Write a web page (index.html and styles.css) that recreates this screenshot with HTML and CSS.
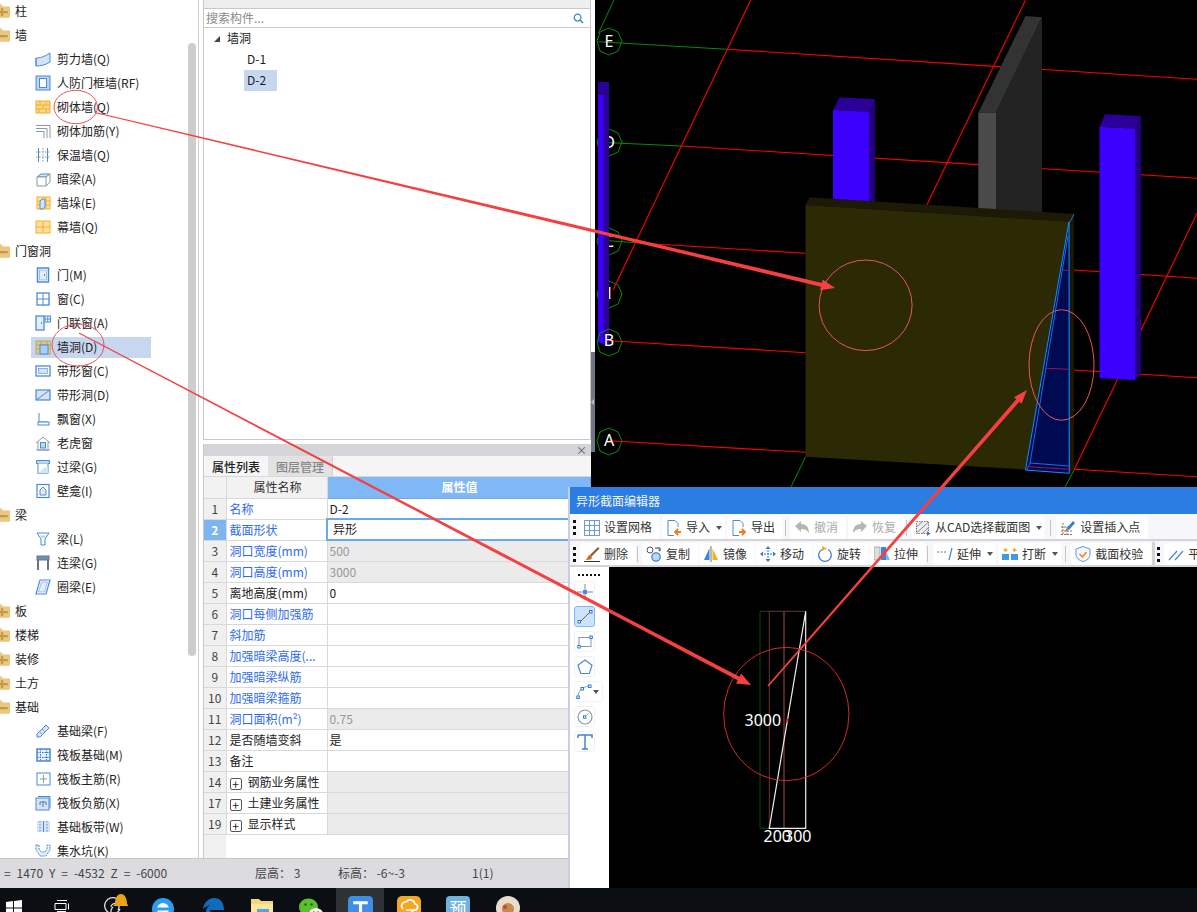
FILE: index.html
```html
<!DOCTYPE html>
<html lang="zh">
<head>
<meta charset="utf-8">
<title>异形截面编辑器</title>
<link rel="stylesheet" href="styles.css">
</head>
<body>
<div class="desktop">
  <div class="workspace">
    <div class="leftcol">
      <div class="panes">
        <nav class="tree">
          <ul class="tree-list">
            <li class="group"><svg class="folder" viewBox="0 2 14 12"><path d="M0 2h6l2 2h8v10H0z" fill="#e9c77f"/><path d="M2 8h10v2H2zM6 5.500h2v7H6z" fill="#c9974a"/></svg>柱</li>
            <li class="group"><svg class="folder" viewBox="0 2 14 12"><path d="M0 2h6l2 2h8v10H0z" fill="#e9c77f"/><path d="M2 8h10v2H2z" fill="#c9974a"/></svg>墙</li>
            <li class="leaf"><svg class="ic" viewBox="0 0 16 16"><path d="M1 7c4 0 8-1 14-5v9c-5 3-9 4-14 4z" fill="#d5e3f5" stroke="#4a8bd6"/><path d="M1 7v8" stroke="#4a8bd6"/></svg>剪力墙(Q)</li>
            <li class="leaf"><svg class="ic" viewBox="0 0 16 16"><rect x="1" y="1" width="14" height="14" fill="#bcd4f0" stroke="#4a8bd6"/><rect x="4.500" y="3.500" width="7" height="9" fill="#fff" stroke="#4a8bd6"/></svg>人防门框墙(RF)</li>
            <li class="leaf"><svg class="ic" viewBox="0 0 16 16"><rect x="1" y="2" width="14" height="12" fill="#fbd88a" stroke="#f0ad2e"/><path d="M1 6h14M1 10h14M5 2v4M11 2v4M8 6v4M4 10v4M11 10v4" stroke="#f0ad2e" fill="none"/></svg>砌体墙(Q)</li>
            <li class="leaf"><svg class="ic" viewBox="0 0 16 16"><path d="M1 2.500h14V15M1 5.500h11V15M1 8.500h8V15" fill="none" stroke="#8a98a8"/></svg>砌体加筋(Y)</li>
            <li class="leaf"><svg class="ic" viewBox="0 0 16 16"><path d="M3.500 1v14M12.500 1v14" stroke="#4a8bd6"/><path d="M8 1v14M1 5h14M1 10h14" stroke="#8a98a8" stroke-dasharray="1.500 1.500"/></svg>保温墙(Q)</li>
            <li class="leaf"><svg class="ic" viewBox="0 0 16 16"><path d="M2 6l4-3h9l-4 3z" fill="#d5e3f5" stroke="#4a8bd6"/><path d="M2 6h9v9H2zM11 6l4-3v8l-4 4" fill="#fff" stroke="#8a98a8"/></svg>暗梁(A)</li>
            <li class="leaf"><svg class="ic" viewBox="0 0 16 16"><rect x="2" y="2" width="13" height="12" fill="#fde3a8" stroke="#f5b01e"/><path d="M2 6h13M2 10h13M11 2v12" stroke="#f5b01e"/><path d="M5 6l2-2h3v8l-2 2H5z" fill="#d5e3f5" stroke="#4a8bd6"/></svg>墙垛(E)</li>
            <li class="leaf"><svg class="ic" viewBox="0 0 16 16"><rect x="1" y="2" width="14" height="12" fill="#fde0a0" stroke="#f5b01e"/><path d="M1 8h14M8 2v12" stroke="#f5b01e"/></svg>幕墙(Q)</li>
            <li class="group"><svg class="folder" viewBox="0 2 14 12"><path d="M0 2h6l2 2h8v10H0z" fill="#e9c77f"/><path d="M2 8h10v2H2z" fill="#c9974a"/></svg>门窗洞</li>
            <li class="leaf"><svg class="ic" viewBox="0 0 16 16"><rect x="2.500" y="1" width="11" height="14" fill="#fff" stroke="#4a8bd6" stroke-width="1.500"/><rect x="4.500" y="3" width="7" height="10" fill="#e4eefa" stroke="#4a8bd6" stroke-width=".5"/><path d="M9.500 7v2" stroke="#4a8bd6"/></svg>门(M)</li>
            <li class="leaf"><svg class="ic" viewBox="0 0 16 16"><rect x="2" y="2" width="12" height="12" fill="#fff" stroke="#4a8bd6" stroke-width="1.300"/><path d="M8 2v12M2 8h12" stroke="#4a8bd6"/></svg>窗(C)</li>
            <li class="leaf"><svg class="ic" viewBox="0 0 16 16"><rect x="1" y="1" width="8" height="14" fill="#e4eefa" stroke="#4a8bd6" stroke-width="1.300"/><rect x="10" y="1" width="5.500" height="6" fill="#fff" stroke="#4a8bd6"/><path d="M12.800 1v6M10 4h5.500M6.500 7v2" stroke="#4a8bd6"/></svg>门联窗(A)</li>
            <li class="leaf selected"><svg class="ic" viewBox="0 0 16 16"><rect x="1" y="1" width="15" height="13" fill="#d9c98e" stroke="#b9a766"/><path d="M1 5h15M1 9h15M6 1v4M12 1v4" stroke="#b9a766"/><rect x="5" y="5" width="8" height="9" fill="#a8d0f5" stroke="#4a8bd6"/></svg>墙洞(D)</li>
            <li class="leaf"><svg class="ic" viewBox="0 0 16 16"><rect x="1" y="3" width="14" height="10" fill="#fff" stroke="#4a8bd6" stroke-width="1.300"/><rect x="3.500" y="5.500" width="9" height="5" fill="#d5e3f5" stroke="#4a8bd6" stroke-width=".6"/></svg>带形窗(C)</li>
            <li class="leaf"><svg class="ic" viewBox="0 0 16 16"><rect x="1" y="3" width="14" height="10" fill="#d5e3f5" stroke="#4a8bd6" stroke-width="1.200"/><path d="M1 13L15 3" stroke="#4a8bd6"/></svg>带形洞(D)</li>
            <li class="leaf"><svg class="ic" viewBox="0 0 16 16"><path d="M4 2v9h9" fill="none" stroke="#4a8bd6"/><rect x="3" y="11" width="11" height="3" fill="#fff" stroke="#4a8bd6"/></svg>飘窗(X)</li>
            <li class="leaf"><svg class="ic" viewBox="0 0 16 16"><path d="M1 8l7-6 7 6M3 7v8h10V7M1 15h14" fill="none" stroke="#8a98a8"/><rect x="5.500" y="7.500" width="5" height="5.500" fill="#bcd8f5" stroke="#4a8bd6"/></svg>老虎窗</li>
            <li class="leaf"><svg class="ic" viewBox="0 0 16 16"><path d="M1.500 1.500h13v3h-13z" fill="#bcd4f0" stroke="#4a8bd6"/><path d="M3 4.500v10h10v-10" fill="#fff" stroke="#4a8bd6"/><path d="M3 14.500l6-6h4v6z" fill="#d5e3f5"/></svg>过梁(G)</li>
            <li class="leaf"><svg class="ic" viewBox="0 0 16 16"><rect x="2" y="1.500" width="12" height="13" fill="#fff" stroke="#4a8bd6" stroke-width="1.200"/><path d="M5 12V7l3-3 3 3v5z" fill="#e4eefa" stroke="#4a8bd6"/></svg>壁龛(I)</li>
            <li class="group"><svg class="folder" viewBox="0 2 14 12"><path d="M0 2h6l2 2h8v10H0z" fill="#e9c77f"/><path d="M2 8h10v2H2z" fill="#c9974a"/></svg>梁</li>
            <li class="leaf"><svg class="ic" viewBox="0 0 16 16"><path d="M2 2h12L10 8v6H6V8z" fill="#fff" stroke="#4a8bd6"/><path d="M4.500 4.500h7L9 7H7z" fill="#bcd4f0"/></svg>梁(L)</li>
            <li class="leaf"><svg class="ic" viewBox="0 0 16 16"><rect x="2" y="1" width="12" height="4" fill="#6d8fb5" stroke="#6b7683"/><path d="M3 5v10M13 5v10" stroke="#6b7683" stroke-width="2"/></svg>连梁(G)</li>
            <li class="leaf"><svg class="ic" viewBox="0 0 16 16"><path d="M5 1h10l-4 14H1z" fill="#fff" stroke="#4a8bd6" stroke-width="1.200"/><path d="M6.500 3h6L9.500 13h-6z" fill="#e4eefa" stroke="#4a8bd6" stroke-width=".5"/></svg>圈梁(E)</li>
            <li class="group"><svg class="folder" viewBox="0 2 14 12"><path d="M0 2h6l2 2h8v10H0z" fill="#e9c77f"/><path d="M2 8h10v2H2zM6 5.500h2v7H6z" fill="#c9974a"/></svg>板</li>
            <li class="group"><svg class="folder" viewBox="0 2 14 12"><path d="M0 2h6l2 2h8v10H0z" fill="#e9c77f"/><path d="M2 8h10v2H2zM6 5.500h2v7H6z" fill="#c9974a"/></svg>楼梯</li>
            <li class="group"><svg class="folder" viewBox="0 2 14 12"><path d="M0 2h6l2 2h8v10H0z" fill="#e9c77f"/><path d="M2 8h10v2H2zM6 5.500h2v7H6z" fill="#c9974a"/></svg>装修</li>
            <li class="group"><svg class="folder" viewBox="0 2 14 12"><path d="M0 2h6l2 2h8v10H0z" fill="#e9c77f"/><path d="M2 8h10v2H2zM6 5.500h2v7H6z" fill="#c9974a"/></svg>土方</li>
            <li class="group"><svg class="folder" viewBox="0 2 14 12"><path d="M0 2h6l2 2h8v10H0z" fill="#e9c77f"/><path d="M2 8h10v2H2z" fill="#c9974a"/></svg>基础</li>
            <li class="leaf"><svg class="ic" viewBox="0 0 16 16"><path d="M2 11L11 2l3 3-9 9H2z" fill="#d5e3f5" stroke="#4a8bd6"/><path d="M4.500 8.500l3 3M7 6l3 3" stroke="#4a8bd6" stroke-width=".7"/></svg>基础梁(F)</li>
            <li class="leaf"><svg class="ic" viewBox="0 0 16 16"><rect x="2" y="2" width="13" height="12" fill="#e4eefa" stroke="#3f7fd0" stroke-width="1.400"/><path d="M2 5.500h13M2 10.500h13M5.500 2v12M11.500 2v12" stroke="#3f7fd0" stroke-dasharray="1.500 1"/></svg>筏板基础(M)</li>
            <li class="leaf"><svg class="ic" viewBox="0 0 16 16"><rect x="2" y="2" width="13" height="12" fill="#fff" stroke="#4a8bd6"/><path d="M8.500 4v8M5 8h7" stroke="#8a98a8"/></svg>筏板主筋(R)</li>
            <li class="leaf"><svg class="ic" viewBox="0 0 16 16"><path d="M3 1.500h12v12" fill="none" stroke="#4a8bd6"/><rect x="1" y="3" width="13" height="12" fill="#d5e3f5" stroke="#4a8bd6"/><path d="M5 7h6M8 6v6M5 7v3M11 7v3" stroke="#5a7da5" fill="none"/></svg>筏板负筋(X)</li>
            <li class="leaf"><svg class="ic" viewBox="0 0 16 16"><rect x="2" y="2" width="13" height="11" fill="#d5e3f5"/><path d="M8.500 2v11" stroke="#4a8bd6"/><path d="M5 2v11M12 2v11" stroke="#4a8bd6" stroke-dasharray="1.500 1.500"/></svg>基础板带(W)</li>
            <li class="leaf"><svg class="ic" viewBox="0 0 16 16"><path d="M1 2h3v4l2 3h4l2-3V2h3v5l-4 6H5L1 7z" fill="#e4eefa" stroke="#4a8bd6" stroke-dasharray="2 1"/></svg>集水坑(K)</li>
          </ul>
          <div class="scrolltrack"><div class="scrollthumb"></div></div>
        </nav>
        <section class="midpane">
          <div class="comp-panel">
            <div class="comp-head"></div>
            <div class="comp-search">
              <span>搜索构件...</span>
              <svg class="search-ic" viewBox="0 0 12 12"><circle cx="5" cy="5" r="3.700" fill="none" stroke="#2b86c5" stroke-width="1.300"/><path d="M8 8l3 3" stroke="#2b86c5" stroke-width="1.500"/></svg>
            </div>
            <ul class="comp-tree">
              <li class="comp-root"><i class="tri"></i>墙洞</li>
              <li class="comp-item">D-1</li>
              <li class="comp-item active">D-2</li>
            </ul>
          </div>
          <div class="prop-panel">
            <div class="prop-head"><span class="close">×</span></div>
            <div class="prop-tabs"><span class="tab on">属性列表</span><span class="tab">图层管理</span></div>
            <table class="props">
              <colgroup><col class="c-num"><col class="c-name"><col></colgroup>
              <thead><tr><th></th><th class="h-name">属性名称</th><th class="h-val">属性值</th></tr></thead>
              <tbody>
                <tr><td class="n">1</td><td class="blue">名称</td><td>D-2</td></tr>
                <tr class="cur"><td class="n">2</td><td class="blue">截面形状</td><td class="edit">异形</td></tr>
                <tr><td class="n">3</td><td class="blue">洞口宽度(mm)</td><td class="ro">500</td></tr>
                <tr><td class="n">4</td><td class="blue">洞口高度(mm)</td><td class="ro">3000</td></tr>
                <tr><td class="n">5</td><td>离地高度(mm)</td><td>0</td></tr>
                <tr><td class="n">6</td><td class="blue">洞口每侧加强筋</td><td></td></tr>
                <tr><td class="n">7</td><td class="blue">斜加筋</td><td></td></tr>
                <tr><td class="n">8</td><td class="blue">加强暗梁高度(...</td><td></td></tr>
                <tr><td class="n">9</td><td class="blue">加强暗梁纵筋</td><td></td></tr>
                <tr><td class="n">10</td><td class="blue">加强暗梁箍筋</td><td></td></tr>
                <tr><td class="n">11</td><td class="blue">洞口面积(m²)</td><td class="ro">0.75</td></tr>
                <tr><td class="n">12</td><td>是否随墙变斜</td><td>是</td></tr>
                <tr><td class="n">13</td><td>备注</td><td></td></tr>
                <tr><td class="n">14</td><td><i class="plus">+</i>钢筋业务属性</td><td class="ro"></td></tr>
                <tr><td class="n">17</td><td><i class="plus">+</i>土建业务属性</td><td class="ro"></td></tr>
                <tr><td class="n">19</td><td><i class="plus">+</i>显示样式</td><td class="ro"></td></tr>
              </tbody>
            </table>
            <div class="prop-fill"><div class="fill-num"></div></div>
          </div>
        </section>
      </div>
      <footer class="status">
        <span class="coords">= 1470 Y = -4532 Z = -6000</span>
        <span class="floor">层高：&nbsp;3</span>
        <span class="elev">标高：&nbsp;-6~-3</span>
        <span class="page">1(1)</span>
      </footer>
    </div>
    <div class="splitter"><div class="split-top"></div><div class="split-grip"><i></i></div><div class="split-bot"></div></div>
    <svg class="view3d" viewBox="595 0 602 888" preserveAspectRatio="none">
      <g stroke="#0a8a0a" fill="none">
        <path d="M614 0L598.500 33M598.500 41.700L727.400 49.300M609 142.700L681 146M609 240.700L634.500 242.700M805.600 456.700L791 487M1074 470L1065 487"/>
        <path d="M609 28l9 4 4 9-4 10-9 4-9-4-3-10 3-9zM609 129l9 4 4 9-4 10-9 4-9-4-3-10 3-9zM609 228l9 4 4 9-4 10-9 4-9-4-3-10 3-9zM609 281l9 4 4 9-4 10-9 4-9-4-3-10 3-9zM609 428l9 4 4 9-4 10-9 4-9-4-3-10 3-9z"/>
      </g>
      <g stroke="#f00" fill="none" stroke-width="1.100">
        <path d="M727.400 49.300L1197 79.300M681 146L1197 178.300M634.500 242.700L805.600 253.300M1074 270L1197 278.300M609 340.700L805.600 352.700M1074 370L1197 377.700M609 440.700L805.600 452.300M1074 469.300L1197 476.700M750.700 0L613 290M1025.500 0L926.800 205M1197 213.300L1074 470"/>
      </g>
      <polygon points="833,110 839.700,97.300 875,99.300 869.500,111.700" fill="#2a0099"/>
      <polygon points="833,110 869.500,111.700 869.500,205 833,205" fill="#3c00ff"/>
      <polygon points="869.500,111.700 875,99.300 875,205 869.500,205" fill="#220080"/>
      <polygon points="978.300,112.700 1025.500,16 1042,17.300 996,112.700" fill="#333"/>
      <polygon points="978.300,112.700 996,112.700 996,212 978.300,212" fill="#4a4a4a"/>
      <polygon points="996,112.700 1042,17.300 1042,214 996,212" fill="#232323"/>
      <polygon points="1099.500,126.700 1105,114.300 1141,116.300 1135,128.700" fill="#2a0099"/>
      <polygon points="1099.500,126.700 1135,128.700 1135,380 1099.500,378" fill="#3c00ff"/>
      <polygon points="1135,128.700 1141,116.300 1141,373 1135,380" fill="#220080"/>
      <polygon points="805.600,205 809.500,197.300 1074,214 1070,221.700" fill="#1c1a04"/>
      <polygon points="805.600,205 1070,221.700 1070,472 805.600,456.700" fill="#2c2905"/>
      <polygon points="1070,221.700 1074,214 1074,470 1070,472" fill="#1a1803"/>
      <polygon points="1069,221.700 1025.500,470 1069.300,473.300" fill="#000a50" stroke="#1a8cff"/>
      <path d="M1074 214l-4 8M1068 236L1030 463l39 3M1027 470l3-7" fill="none" stroke="#1a8cff" stroke-width=".8"/>
      <path d="M1046 368.300l23 1M1063 270l6 .7M1027.500 466.700l41.800 2.600" stroke="#a01050" fill="none"/>
      <g fill="#fff" font-size="16" text-anchor="middle" class="axis">
        <text x="609" y="47">E</text><text x="609" y="148">D</text><text x="609" y="247">C</text><text x="609" y="299">1</text><text x="609" y="446">A</text>
      </g>
      <polygon points="598,82 609,82 609,347 598,342" fill="#2a0099"/>
      <polygon points="598,95 603.500,95 603.500,344 598,342" fill="#3c00ff"/>
      <path d="M609 329l9 4 4 9-4 10-9 4-9-4-3-10 3-9z" stroke="#0a8a0a" fill="none"/>
      <text x="609" y="346" fill="#fff" font-size="16" text-anchor="middle" class="axis">B</text>
    </svg>
  </div>
  <div class="taskbar">
    <svg class="tb-icon win" viewBox="0 0 16 16"><path d="M0 2l7-1v6.500H0zM8 1l8-1v7.500H8zM0 8.500h7V15l-7-1zM8 8.500h8V16l-8-1z" fill="#fff"/></svg>
    <svg class="tb-icon taskview" viewBox="0 0 16 12"><path d="M3 .5h10M1 3.500h11v6H1zM3 11.500h9M14.500 3.500v6" fill="none" stroke="#fff"/></svg>
    <svg class="tb-icon swirl" viewBox="0 0 28 24"><path d="M17 8a8 8 0 1 0 3 10M11 16a4 4 0 1 1 7 3M13 24a5 5 0 0 1 0-8" fill="none" stroke="#ddd" stroke-width="1.300"/><path d="M15 13c0-7 3-10 6-10s6 3 6 10l2 2H13z" fill="#e8a317"/></svg>
    <svg class="tb-icon ie" viewBox="0 0 22 22"><circle cx="11" cy="11" r="11" fill="#2a9df4"/><circle cx="11" cy="11" r="6" fill="#fff"/><rect x="5" y="9.500" width="12" height="3" fill="#2a9df4"/></svg>
    <svg class="tb-icon edge" viewBox="0 0 22 22"><path d="M1 11C2 4 7 0 12 0c6 0 10 4 10 12H8c0 4 6 6 12 3v6c-8 3-16 0-16-7 0-3 1-5 4-7-3 1-5 2-7 4z" fill="#0f6cbd"/></svg>
    <svg class="tb-icon explorer" viewBox="0 0 22 22"><path d="M0 2h8l2 2h12v18H0z" fill="#f5d67b"/><rect x="0" y="7" width="22" height="15" fill="#fbe6a0"/><rect x="6" y="12" width="12" height="5" fill="#4aa7e8"/></svg>
    <svg class="tb-icon wechat" viewBox="0 0 24 22"><ellipse cx="9.500" cy="9" rx="9.500" ry="8.500" fill="#5cc02c"/><ellipse cx="17" cy="16" rx="7" ry="6" fill="#f2f2f2"/><circle cx="6.500" cy="6.500" r="1.200" fill="#1e5c0a"/><circle cx="12.500" cy="6.500" r="1.200" fill="#1e5c0a"/><circle cx="15" cy="14" r=".9" fill="#888"/><circle cx="19" cy="14" r=".9" fill="#888"/></svg>
    <div class="tb-active"><svg class="tb-icon tapp" viewBox="0 0 24 24"><rect width="24" height="24" rx="4" fill="#3d8fe6"/><path d="M5 5h14v3h-5.500v12h-3V8H5z" fill="#fff"/></svg></div>
    <svg class="tb-icon orange" viewBox="0 0 24 24"><rect width="24" height="24" rx="5" fill="#f5a623"/><path d="M6 13a4 4 0 0 1 3-7 5 5 0 0 1 9 2 3 3 0 0 1-1 6H9M8 18c4 0 8-2 9-5" fill="none" stroke="#fff" stroke-width="1.600"/></svg>
    <div class="tb-yu">预</div>
    <svg class="tb-icon avatar" viewBox="0 0 24 24"><circle cx="12" cy="12" r="12" fill="#e8dccb"/><circle cx="12" cy="13" r="6" fill="#c9894a"/><circle cx="9" cy="11" r="2" fill="#b3541e"/></svg>
  </div>
</div>

<section class="dialog">
  <header class="dlg-title">异形截面编辑器</header>
  <div class="toolbar">
    <i class="grip"></i>
    <button class="btn first"><svg class="ti" viewBox="0 0 16 16"><rect x=".5" y=".5" width="15" height="15" fill="none" stroke="#6a9ad6"/><path d="M5.500 .5v15M10.500 .5v15M.5 5.500h15M.5 10.500h15" stroke="#6a9ad6"/></svg>设置网格</button>
    <button class="btn caret"><svg class="ti" viewBox="0 0 16 16"><path d="M2 .5h7l3 3V7M2 .5v15h6" fill="#fff" stroke="#4a8bd6"/><path d="M15 12H9m3-3l-3 3 3 3" fill="none" stroke="#f07a20" stroke-width="1.800"/></svg>导入<i class="dn"></i></button>
    <button class="btn"><svg class="ti" viewBox="0 0 16 16"><path d="M2 .5h7l3 3V7M2 .5v15h6" fill="#fff" stroke="#4a8bd6"/><path d="M8 12h6m-3-3l3 3-3 3" fill="none" stroke="#f07a20" stroke-width="1.800"/></svg>导出</button>
    <i class="sep"></i>
    <button class="btn off"><svg class="ti" viewBox="0 0 16 16"><path d="M1 6l6-5v3c5 0 8 3 8 9-2-3-4-4-8-4v3z" fill="#b5b5b5"/></svg>撤消</button>
    <button class="btn off"><svg class="ti" viewBox="0 0 16 16"><path d="M15 6L9 1v3c-5 0-8 3-8 9 2-3 4-4 8-4v3z" fill="#b5b5b5"/></svg>恢复</button>
    <i class="sep"></i>
    <button class="btn caret"><svg class="ti" viewBox="0 0 16 16"><rect x="1.500" y="1.500" width="12" height="12" fill="#eee" stroke="#777" stroke-dasharray="1.500 1"/><path d="M1.500 7l6-5.500M1.500 13l12-11M7 13.500l6.500-6" stroke="#888"/><path d="M12 11v5l3.500-2.500z" fill="#3a7fd5"/></svg>从CAD选择截面图<i class="dn"></i></button>
    <i class="sep wide"></i>
    <button class="btn"><svg class="ti" viewBox="0 0 16 16"><path d="M3 3v12M7 7v8M1 7h9M1 11h11M1 14.500h11" stroke="#777" stroke-dasharray="2 1" fill="none"/><path d="M7 8l6-7 2 2-6 7z" fill="#2f7fd8"/><circle cx="7" cy="10" r="1.500" fill="#f07a20"/></svg>设置插入点</button>
  </div>
  <div class="toolbar row2">
    <i class="grip"></i>
    <button class="btn first"><svg class="ti" viewBox="0 0 16 16"><path d="M6 9l8-8 1.500 1.500-8 8z" fill="#8a5a2b"/><path d="M1 14c3 0 2-5 5-5l2 2c0 3-4 3-7 3z" fill="#d2691e"/><path d="M0 15.500h16" stroke="#333"/></svg>删除</button>
    <i class="sep after-del"></i>
    <button class="btn"><svg class="ti" viewBox="0 0 16 16"><circle cx="4" cy="4" r="3" fill="none" stroke="#555"/><circle cx="10" cy="11" r="4.200" fill="#bcd8f5" stroke="#3f84d6" stroke-width="1.300"/><path d="M9 2h5v3l-1.500-1" fill="none" stroke="#333"/></svg>复制</button>
    <button class="btn"><svg class="ti" viewBox="0 0 16 16"><path d="M6.500 2v12H1z" fill="#3f84d6"/><path d="M9.500 2v12H15z" fill="#f5b01e"/><path d="M8 0v16" stroke="#777"/></svg>镜像</button>
    <button class="btn"><svg class="ti" viewBox="0 0 16 16"><path d="M8 0l2.500 3h-5zM8 16l2.500-3h-5zM0 8l3-2.500v5zM16 8l-3-2.500v5z" fill="#2f7fd8"/><path d="M4 8h8M8 4v8" stroke="#2f7fd8" stroke-dasharray="2 1"/></svg>移动</button>
    <button class="btn"><svg class="ti" viewBox="0 0 16 16"><path d="M5 3.500a6.300 6.300 0 1 0 6 0" fill="none" stroke="#3f84d6" stroke-width="1.300"/><path d="M5 0l5 2.500L5 5z" fill="#f5a623"/></svg>旋转</button>
    <button class="btn"><svg class="ti" viewBox="0 0 16 16"><rect x="0" y="1" width="6" height="13" fill="#ddd" stroke="#888" stroke-width=".6"/><rect x="7" y="1" width="5" height="13" fill="#3f84d6"/><path d="M12 14l4 0-4-9z" fill="#8ab8ec"/></svg>拉伸</button>
    <i class="sep"></i>
    <button class="btn caret ext"><svg class="ti" viewBox="0 0 16 16"><path d="M0 6h9" stroke="#777" stroke-dasharray="2 1.500"/><path d="M15 2l-3 12" stroke="#3f84d6" stroke-width="1.200"/></svg>延伸<i class="dn"></i></button>
    <button class="btn caret cut"><svg class="ti" viewBox="0 0 16 16"><rect x="0" y="8" width="7" height="6" fill="#3f9be8"/><rect x="9" y="8" width="7" height="6" fill="#3f9be8"/><path d="M3.500 6V2M1.500 4h4M12.500 6V2M10.500 4h4" stroke="#f5a623" stroke-width="1.300"/></svg>打断<i class="dn"></i></button>
    <i class="sep wide"></i>
    <button class="btn check"><svg class="ti" viewBox="0 0 16 16"><path d="M8 .5l7 2.500v5c0 4-3 6.500-7 7.500-4-1-7-3.500-7-7.500V3z" fill="#f4f8fd" stroke="#5a9ade"/><path d="M4.500 8l3 3 4-5" fill="none" stroke="#f07a20" stroke-width="1.400"/></svg>截面校验</button>
    <i class="sep heavy"></i>
    <i class="grip"></i>
    <button class="btn last"><svg class="ti" viewBox="0 0 16 16"><path d="M1 14L9 5M7 14l8-9" stroke="#3f84d6" stroke-width="1.200"/></svg>平行</button>
  </div>
  <div class="dlg-body">
    <aside class="tools">
      <i class="tools-grip"></i>
      <button class="tool"><svg class="tool-ic" viewBox="0 0 16 16"><path d="M8 0v5M8 11v5M0 8h5M11 8h5" stroke="#888"/><circle cx="8" cy="8" r="2.500" fill="#4a8bd6"/></svg></button>
      <button class="tool on"><svg class="tool-ic" viewBox="0 0 16 16"><path d="M3 13L13 3" stroke="#666"/><rect x="1" y="11.500" width="2.500" height="2.500" fill="#fff" stroke="#2f7fd8"/><rect x="12.500" y="1.500" width="2.500" height="2.500" fill="#fff" stroke="#2f7fd8"/></svg></button>
      <button class="tool"><svg class="tool-ic" viewBox="0 0 16 16"><rect x="2" y="3.500" width="12" height="9" fill="none" stroke="#8a98a8"/><rect x=".8" y="11.500" width="2.500" height="2.500" fill="#fff" stroke="#2f7fd8"/><rect x="12.800" y="2" width="2.500" height="2.500" fill="#fff" stroke="#2f7fd8"/></svg></button>
      <button class="tool"><svg class="tool-ic" viewBox="0 0 16 16"><path d="M8 1l7 5.200-2.700 8.300H3.700L1 6.200z" fill="none" stroke="#4a8bd6" stroke-width="1.200"/></svg></button>
      <button class="tool wide"><svg class="tool-ic" viewBox="0 0 16 16"><path d="M2 13C2 7 6 3 13 2" fill="none" stroke="#8a98a8"/><rect x=".8" y="12" width="2.500" height="2.500" fill="#fff" stroke="#2f7fd8"/><rect x="5" y="3.500" width="2.500" height="2.500" fill="#fff" stroke="#2f7fd8"/><rect x="12.500" y="1" width="2.500" height="2.500" fill="#fff" stroke="#2f7fd8"/></svg><i class="dn small"></i></button>
      <button class="tool"><svg class="tool-ic" viewBox="0 0 16 16"><circle cx="8" cy="8" r="7" fill="none" stroke="#8a98a8" stroke-width="1.200"/><path d="M8 8l4-4" stroke="#4a8bd6" stroke-dasharray="1.500 1"/><rect x="6.500" y="6.800" width="2.400" height="2.400" fill="#fff" stroke="#2f7fd8"/></svg></button>
      <button class="tool"><svg class="tool-ic" viewBox="0 0 16 16"><path d="M1 1h14v3M1 1v3M8 1v14M5 15h6" fill="none" stroke="#3f84d6" stroke-width="1.500"/></svg></button>
    </aside>
    <svg class="section-canvas" viewBox="609 567 588 321" preserveAspectRatio="none">
      <path d="M760 611.300h10M760 611.300V828.300h10" fill="none" stroke="#0a4a0a"/>
      <path d="M769.300 611.300h36.400M769.300 611.300V828M784 611.300V828.300" fill="none" stroke="#6b3535"/>
      <path d="M784 611.300V828.300" stroke="#6b3535"/>
      <path d="M805.700 611.300V828.300H769.300z" fill="none" stroke="#eee" stroke-width="1.200"/>
      <ellipse cx="786.300" cy="714" rx="62.700" ry="66.700" fill="none" stroke="#d62a2a"/>
      <circle cx="787.300" cy="720" r="1.500" fill="#f00"/>
      <g fill="#fff" font-size="16" class="axis">
        <text x="744.500" y="726">3000</text>
        <text x="763.500" y="842">200</text>
        <text x="784" y="842">300</text>
      </g>
    </svg>
  </div>
</section>

<svg class="annot" viewBox="0 0 1197 912">
  <g fill="none" stroke="#e8555c">
    <ellipse cx="75.700" cy="107" rx="21.700" ry="16.700"/>
    <ellipse cx="78" cy="345" rx="26" ry="21"/>
    <ellipse cx="865.600" cy="305.300" rx="46.500" ry="45.300"/>
    <ellipse cx="1061.500" cy="365" rx="32.500" ry="55.300"/>
  </g>
  <g fill="#f54040">
    <polygon points="97.100,112.500 821.900,282.900 822.700,279.500 835,288 820.100,290.200 820.900,286.800 96.900,113.500"/>
    <polygon points="79.200,332.600 739.500,676.700 741.200,673.600 751,685 736,683.400 737.700,680.300 78.800,333.400"/>
    <polygon points="767.400,685.500 1016.300,399.200 1014,397.200 1027,390 1021.600,403.800 1019.300,401.800 768.600,686.500"/>
  </g>
</svg>
</body>
</html>
```

FILE: styles.css
```css
* { box-sizing: border-box; }
html, body { margin: 0; padding: 0; }
body {
  width: 1197px;
  height: 912px;
  overflow: hidden;
  position: relative;
  background: #fff;
  font: 12px/1.2 "Noto Sans CJK SC", "Noto Sans", sans-serif;
  color: #222;
}
ul { list-style: none; margin: 0; padding: 0; }
i { font-style: normal; }

.desktop { display: flex; flex-direction: column; height: 912px; }
.workspace { display: flex; height: 888px; }
.leftcol { width: 591px; display: flex; flex-direction: column; }
.panes { display: flex; height: 858px; overflow: hidden; }

/* left tree */
.tree {
  width: 199px;
  border-right: 1px solid #cfcfcf;
  display: flex;
  overflow: hidden;
}
.tree-list { flex: 1; margin-top: -1px; min-width: 0; }
.group, .leaf { display: flex; align-items: center; height: 24px; white-space: nowrap; }
.folder { width: 16px; height: 14px; margin-left: -6px; margin-right: 5px; flex: none; }
.leaf { margin-left: 31px; width: 120px; padding-left: 4px; }
.leaf.selected {
  background: #c7d7ef;
  background-clip: padding-box;
  border-top: 2px solid transparent;
  border-bottom: 1px solid transparent;
}
.ic { width: 16px; height: 16px; margin-right: 6px; flex: none; }
.scrolltrack { width: 10px; padding-right: 2px; flex: none; }
.scrollthumb { margin-top: 43px; height: 613px; width: 8px; border-radius: 4px; background: #cdcdcd; }

/* middle pane */
.midpane { margin-left: 4px; width: 388px; display: flex; flex-direction: column; }
.comp-panel {
  height: 440px;
  border: 1px solid #c8c8c8;
  border-top: 0;
  display: flex;
  flex-direction: column;
}
.comp-head { height: 8px; background: #eeeeee; border-bottom: 1px solid #c8c8c8; box-sizing: content-box; }
.comp-search {
  height: 19px;
  border-bottom: 1px solid #c8c8c8;
  display: flex;
  align-items: center;
  justify-content: space-between;
  padding: 0 6px 0 2px;
  color: #8a8a8a;
}
.search-ic { width: 11px; height: 11px; }
.comp-root { display: flex; align-items: center; height: 21px; padding-left: 10px; }
.tri {
  width: 0; height: 0;
  margin-right: 7px;
  border-left: 6px solid transparent;
  border-bottom: 6px solid #444;
}
.comp-item { height: 21px; line-height: 20px; margin-left: 40px; padding-left: 3px; width: 33px; }
.comp-item.active { background: #c7d7ef; }

.prop-panel {
  margin-top: 4px;
  flex: 1;
  display: flex;
  flex-direction: column;
  border-left: 1px solid #c8c8c8;
  min-height: 0;
}
.prop-head {
  height: 12px;
  background: #d4d5d9;
  display: flex;
  justify-content: flex-end;
  align-items: center;
  padding-right: 4px;
  color: #555;
  font-size: 11px;
  line-height: 12px;
}
.prop-tabs { display: flex; background: #f5f5f5; border-bottom: 1px solid #d8d8d8; box-sizing: content-box; height: 20px; }
.tab {
  width: 65px;
  text-align: center;
  line-height: 21px;
  color: #888;
  background: #e2e2e2;
  border-right: 1px solid #cfcfcf;
  font-weight: 500;
}
.tab.on { color: #222; background: #f5f5f5; border-right: 0; width: 64px; }
.props { width: 100%; border-collapse: collapse; table-layout: fixed; background: #fff; }
.c-num { width: 22px; }
.c-name { width: 101px; }
.props th, .props td {
  height: 21px;
  padding: 1px 0 0 2px;
  border: 1px solid #d9d9d9;
  border-width: 0 1px 1px 0;
  font-weight: 400;
  white-space: nowrap;
  overflow: hidden;
  text-align: left;
}
.props td:nth-child(2) { padding-left: 3px; }
.props th { background: #f2f2f2; padding-top: 0; }
.props .h-name { text-align: center; color: #333; }
.props .h-val { text-align: center; background: #7fb8f5; color: #fff; font-weight: 700; border-color: #6aa9ec; }
.props .n { background: #f0f0f0; text-align: center; color: #444; padding: 1px 0 0; }
.props .blue { color: #2f6be8; }
.props .ro { background: #ebebeb; color: #999; }
.cur .n { background: #7cb5ef; color: #fff; font-weight: 700; }
.props .edit { border: 2px solid #6aa9ec; padding: 0 0 0 5px; }
.plus {
  display: inline-block;
  width: 12px; height: 12px;
  margin-right: 6px;
  border: 1px solid #555;
  border-radius: 2px;
  line-height: 9px;
  text-align: center;
  font-size: 12px;
  vertical-align: -2px;
}
.prop-fill { flex: 1; display: flex; background: #fff; }
.fill-num { width: 22px; background: #f0f0f0; }

/* status */
.status {
  height: 30px;
  background: #dcdce0;
  border-top: 1px solid #c8c8c8;
  display: flex;
  align-items: center;
  color: #444;
  white-space: nowrap;
}
.coords { margin-left: 4px; width: 251px; word-spacing: 3.200px; }
.floor { width: 83px; }
.elev { width: 134px; }

/* splitter and 3d view */
.splitter { width: 4px; display: flex; flex-direction: column; flex: none; }
.split-top { height: 352px; background: #fff; }
.split-grip { height: 100px; background: #6e7783; display: flex; align-items: center; }
.split-grip i { width: 0; height: 0; border: 3px solid transparent; border-right-color: #bbb; border-left: 0; }
.split-bot { flex: 1; background: #000; }
.view3d { flex: 1; height: 888px; background: #000; display: block; }
.axis { font-family: "Noto Sans", sans-serif; }

/* dialog window */
.dialog {
  position: absolute;
  left: 568px;
  top: 487px;
  width: 629px;
  height: 401px;
  display: flex;
  flex-direction: column;
  border-left: 2px solid #c8d0e0;
  overflow: hidden;
  background: #fff;
}
.dlg-title {
  height: 27px;
  margin-left: -2px;
  background: #2b7de1;
  color: #f2f6fc;
  line-height: 27px;
  padding-left: 8px;
  font-size: 12px;
}
.toolbar {
  height: 27px;
  display: flex;
  align-items: center;
  gap: 2px;
  background: #f7f7f9;
  border-bottom: 2px solid #d4d4d8;
  padding: 2px 0 0 3px;
  white-space: nowrap;
}
.row2 { height: 26px; gap: 1px; }
.grip {
  width: 3px;
  height: 15px;
  flex: none;
  margin-right: 2px;
  background: repeating-linear-gradient(#111 0 3px, transparent 3px 6px);
}
.row2 .grip { margin-right: 3px; }
.btn {
  flex: none;
  display: flex;
  align-items: center;
  height: 23px;
  padding: 0 8px 0 4px;
  border: 0;
  border-radius: 3px;
  background: #fff;
  font: inherit;
  color: #333;
}
.row2 .btn { height: 22px; }
.btn.caret { padding-right: 3px; }
.btn.off { color: #aaa; }
.btn.ext { margin-left: 2px; }
.btn.cut { margin-left: 1px; }
.btn.check { margin-left: 1px; }
.ti { width: 16px; height: 16px; margin-right: 4px; flex: none; }
.dn {
  width: 0; height: 0;
  margin-left: 6px;
  border: 3px solid transparent;
  border-top: 4px solid #555;
  border-bottom: 0;
}
.dn.small { margin-left: 1px; }
.sep { width: 1px; height: 16px; background: #c4c4c4; flex: none; margin-right: 2px; }
.sep.after-del { margin-right: 3px; }
.sep.wide { margin: 0 3px 0 3px; }
.sep.heavy { width: 3px; height: 25px; background: #d4d4d8; margin-right: 1px; }
.dlg-body { flex: 1; display: flex; min-height: 0; }
.tools {
  width: 39px;
  flex: none;
  background: #fff;
  display: flex;
  flex-direction: column;
  align-items: flex-start;
  gap: 4px;
  padding: 7px 0 0 4px;
}
.tools-grip { width: 22px; height: 2px; margin: 0 0 1px 4px; background: repeating-linear-gradient(90deg, #111 0 2px, transparent 2px 4px); }
.tool {
  width: 21px; height: 21px;
  padding: 0;
  border: 1px solid #f2f2f2;
  border-radius: 3px;
  background: #fff;
  display: flex;
  align-items: center;
  justify-content: center;
}
.tool.on { background: #cce4ff; border-color: #7fb8f5; }
.tool.wide { width: 29px; justify-content: flex-start; padding-left: 1px; }
.tool-ic { width: 16px; height: 16px; flex: none; }
.section-canvas { flex: 1; height: 100%; background: #000; display: block; }

/* taskbar */
.taskbar {
  height: 24px;
  background: #0b0f14;
  display: flex;
  overflow: hidden;
  align-items: flex-start;
}
.tb-icon { flex: none; display: block; }
.win { width: 16px; height: 16px; margin: 12px 0 0 6px; }
.taskview { width: 16px; height: 12px; margin: 12px 0 0 32px; }
.swirl { width: 28px; height: 24px; margin: 3px 0 0 30px; }
.ie { width: 22px; height: 22px; margin: 10px 0 0 24px; }
.edge { width: 22px; height: 22px; margin: 10px 0 0 28px; }
.explorer { width: 22px; height: 22px; margin: 9px 0 0 27px; }
.wechat { width: 24px; height: 22px; margin: 10px 0 0 26px; }
.tb-active { width: 48px; height: 24px; margin-left: 13px; background: #2e3136; flex: none; padding: 8px 0 0 12px; }
.tapp { width: 25px; height: 25px; }
.orange { width: 24px; height: 24px; margin: 8px 0 0 13px; }
.tb-yu {
  flex: none;
  width: 24px; height: 24px;
  margin: 8px 0 0 25px;
  border-radius: 4px;
  background: #6fb4dc;
  color: #fff;
  font-size: 17px;
  line-height: 24px;
  text-align: center;
}
.avatar { width: 24px; height: 24px; margin: 8px 0 0 26px; }

/* hand-drawn annotations lying over everything */
.annot { position: absolute; left: 0; top: 0; width: 1197px; height: 912px; pointer-events: none; }
```
